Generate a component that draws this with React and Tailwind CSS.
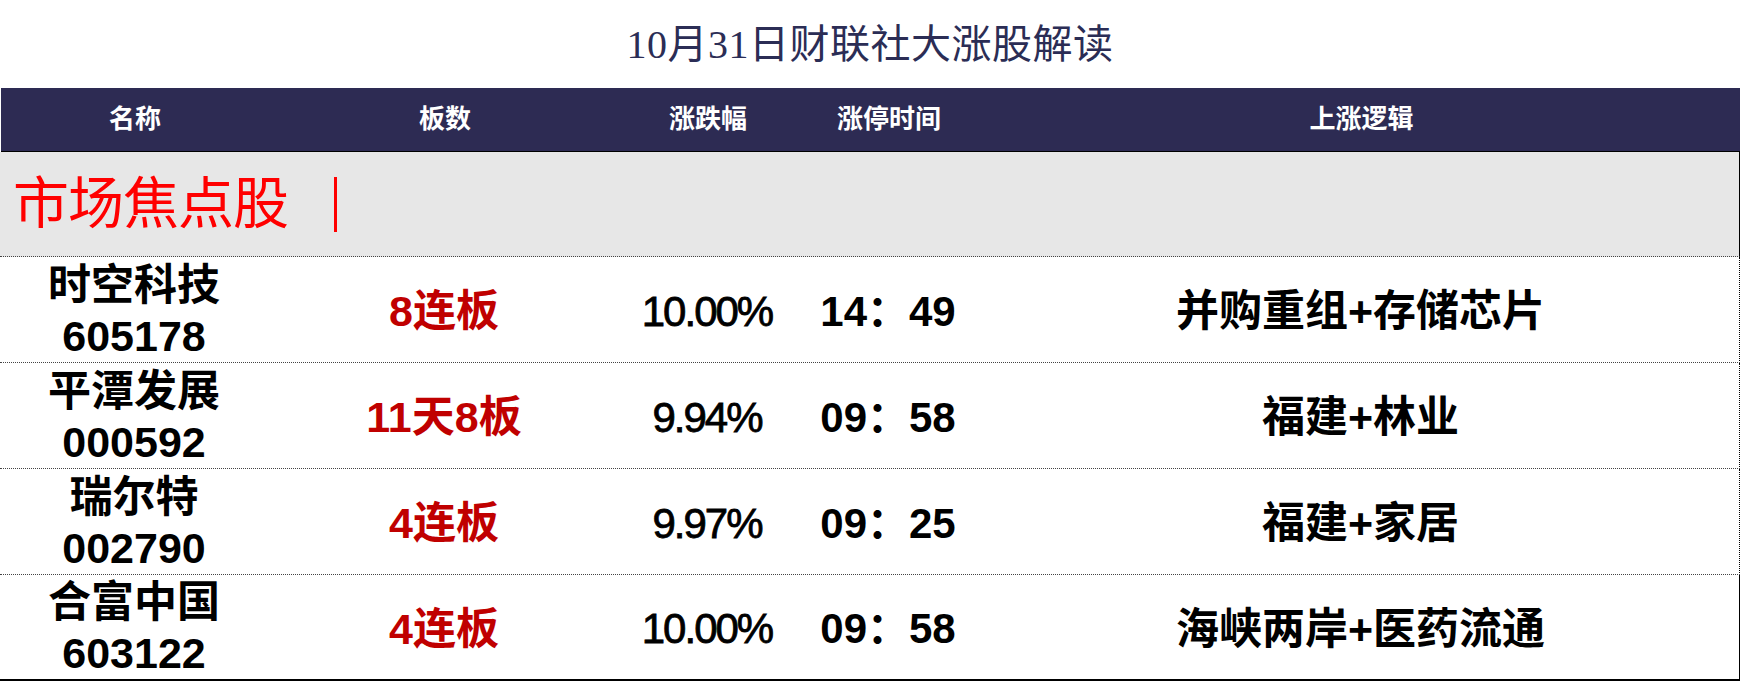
import React from 'react';

const rows = [
  { name: '时空科技', code: '605178', boards: '8连板', pct: '10.00%', time: '14：49', logic: '并购重组+存储芯片' },
  { name: '平潭发展', code: '000592', boards: '11天8板', pct: '9.94%', time: '09：58', logic: '福建+林业' },
  { name: '瑞尔特', code: '002790', boards: '4连板', pct: '9.97%', time: '09：25', logic: '福建+家居' },
  { name: '合富中国', code: '603122', boards: '4连板', pct: '10.00%', time: '09：58', logic: '海峡两岸+医药流通' },
];

const cols = 'grid grid-cols-[268px_352px_174px_188px_1fr]';

export default function App() {
  return (
    <div className="w-[1740px] h-[682px] bg-white font-['Liberation_Sans','Noto_Sans_CJK_SC',sans-serif] overflow-hidden">
      {/* Title */}
      <div className="h-[88px] flex items-center justify-center pt-[2px]">
        <h1 className="font-['Liberation_Serif','Noto_Sans_CJK_SC',serif] text-[40px] leading-none text-[#2b2d55] font-normal tracking-[0.5px]">
          10月31日财联社大涨股解读
        </h1>
      </div>

      {/* Header */}
      <div className={`${cols} h-[64px] bg-[#2d2b53] border-b border-black ml-[1px] text-white text-[26px] font-bold items-center`}>
        <div className="text-center">名称</div>
        <div className="text-center">板数</div>
        <div className="text-center">涨跌幅</div>
        <div className="text-center">涨停时间</div>
        <div className="text-center">上涨逻辑</div>
      </div>

      {/* Section */}
      <div className="h-[105px] bg-[#e7e7e7] border-r border-b border-r-black border-b-[#444] flex items-center pl-[13px]" style={{ borderBottomStyle: 'dotted' }}>
        <span className="font-['Liberation_Serif','Noto_Sans_CJK_SC',serif] text-[56px] leading-none text-[#ff0000] tracking-[-1px]">市场焦点股</span>
        <span className="ml-[46px] w-[3px] h-[55px] bg-[#ff0000]" />
      </div>

      {/* Rows */}
      {rows.map((r, i) => (
        <div
          key={r.code}
          className={`${cols} h-[106px] border-r border-r-black items-center ${
            i === rows.length - 1 ? 'border-b-2 border-b-black' : 'border-b border-b-[#444] border-dotted'
          }`}
        >
          <div className="text-center text-[43px] font-bold leading-[51px] text-black pt-[2px]">
            <div>{r.name}</div>
            <div>{r.code}</div>
          </div>
          <div className="text-center text-[43px] font-bold text-[#c00000] leading-none pt-[4px]">{r.boards}</div>
          <div className="text-center text-[42px] text-black leading-none tracking-[-2px] pt-[4px] [-webkit-text-stroke:0.8px_black]">{r.pct}</div>
          <div className="text-center text-[42px] font-bold text-black leading-none pt-[4px] whitespace-nowrap">{r.time}</div>
          <div className="text-center text-[43px] font-bold text-black leading-none pt-[4px]">{r.logic}</div>
        </div>
      ))}
    </div>
  );
}
